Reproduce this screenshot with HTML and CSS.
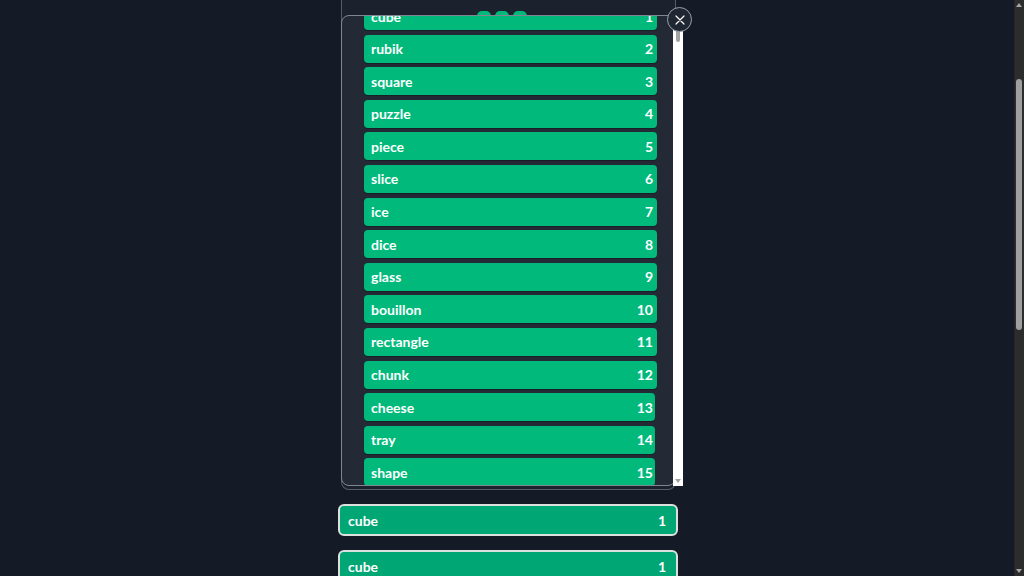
FILE: index.html
```html
<!DOCTYPE html>
<html lang="en">
<head>
<meta charset="utf-8">
<title>Sortable list</title>
<link rel="stylesheet" href="styles.css">
</head>
<body>
<main class="column">
  <section class="board">
    <div class="board-head">
      <span class="pill"></span><span class="pill"></span><span class="pill"></span>
    </div>
    <div class="modal">
      <div class="list">
        <div class="item"><span>cube</span><span>1</span></div>
        <div class="item"><span>rubik</span><span>2</span></div>
        <div class="item"><span>square</span><span>3</span></div>
        <div class="item"><span>puzzle</span><span>4</span></div>
        <div class="item"><span>piece</span><span>5</span></div>
        <div class="item"><span>slice</span><span>6</span></div>
        <div class="item"><span>ice</span><span>7</span></div>
        <div class="item"><span>dice</span><span>8</span></div>
        <div class="item"><span>glass</span><span>9</span></div>
        <div class="item"><span>bouillon</span><span>10</span></div>
        <div class="item"><span>rectangle</span><span>11</span></div>
        <div class="item"><span>chunk</span><span>12</span></div>
        <div class="item narrow"><span>cheese</span><span>13</span></div>
        <div class="item narrow"><span>tray</span><span>14</span></div>
        <div class="item narrow"><span>shape</span><span>15</span></div>
        <div class="item narrow"><span>block</span><span>16</span></div>
        <div class="item narrow"><span>box</span><span>17</span></div>
        <div class="item narrow"><span>brick</span><span>18</span></div>
      </div>
      <div class="mini-scroll" aria-hidden="true">
        <span class="mini-thumb"></span>
        <span class="mini-arrow"></span>
      </div>
      <button class="close" type="button" aria-label="Close">
        <svg viewBox="0 0 24 24" width="12" height="12"><path d="M4 4 L20 20 M20 4 L4 20" stroke="#ffffff" stroke-width="2.4" stroke-linecap="round" fill="none"/></svg>
      </button>
    </div>
  </section>
  <div class="card"><span>cube</span><span>1</span></div>
  <div class="card"><span>cube</span><span>1</span></div>
  <div class="card"><span>cube</span><span>1</span></div>
  <div class="card"><span>cube</span><span>1</span></div>
  <div class="card"><span>cube</span><span>1</span></div>
  <div class="card"><span>cube</span><span>1</span></div>
  <div class="card"><span>cube</span><span>1</span></div>
  <div class="card"><span>cube</span><span>1</span></div>
  <div class="card"><span>cube</span><span>1</span></div>
  <div class="card"><span>cube</span><span>1</span></div>
  <div class="card"><span>cube</span><span>1</span></div>
  <div class="card"><span>cube</span><span>1</span></div>
  <div class="card"><span>cube</span><span>1</span></div>
</main>
<div class="page-scroll" aria-hidden="true">
  <span class="ps-arrow up"></span>
  <span class="ps-thumb"></span>
  <span class="ps-arrow down"></span>
</div>
<script src="script.js"></script>
</body>
</html>
```
FILE: styles.css
```css
html {
  background: #141b26;
}
body {
  margin: 0;
  background: #141b26;
  font-family: "Lato", "Open Sans", "Liberation Sans", sans-serif;
  color: #ffffff;
}
.column {
  width: 340px;
  margin-left: 338px;
  padding: 20px 0 13px;
}
.board {
  position: relative;
  height: 612px;
  margin: 0 2px 0 3px;
  box-sizing: border-box;
  border: 1px solid rgba(200, 206, 214, 0.35);
  border-radius: 8px;
  background: #1b222d;
}
.board-head {
  display: flex;
  gap: 4px;
  padding: 132px 0 0 135px;
}
.pill {
  width: 14px;
  height: 12px;
  border-radius: 5px;
  background: #00b97b;
}
.modal {
  position: absolute;
  left: -1px;
  right: -1px;
  top: 136px;
  bottom: 3px;
  box-sizing: border-box;
  border: 1px solid #80868f;
  border-radius: 8px;
  background: #232a36;
}
.list {
  height: 100%;
  box-sizing: border-box;
  padding: 10px 0 10px 22px;
  overflow-y: scroll;
  scrollbar-width: none;
  border-radius: 8px 0 0 8px;
}
.item {
  display: flex;
  align-items: center;
  justify-content: space-between;
  width: 293px;
  height: 28px;
  box-sizing: border-box;
  padding: 0 4px 0 7px;
  margin-bottom: 4.6px;
  border-radius: 4px;
  background: #00b97b;
  box-shadow: 0 1px 1px rgba(0, 0, 0, 0.3);
  font-size: 14px;
  font-weight: 700;
}
.item.narrow {
  width: 291px;
  padding-right: 2px;
}
.mini-scroll {
  position: absolute;
  top: 0;
  bottom: -1px;
  right: -8px;
  width: 10px;
  background: #ffffff;
}
.mini-thumb {
  position: absolute;
  top: 12px;
  left: 3px;
  width: 4px;
  height: 14px;
  border-radius: 2px;
  background: #a3a3a3;
}
.mini-arrow {
  position: absolute;
  bottom: 3px;
  left: 2px;
  width: 0;
  height: 0;
  border-left: 3px solid transparent;
  border-right: 3px solid transparent;
  border-top: 4px solid #a3a3a3;
}
.close {
  position: absolute;
  top: -9px;
  right: -17px;
  width: 25px;
  height: 25px;
  padding: 0;
  display: flex;
  align-items: center;
  justify-content: center;
  border: 1.5px solid #9aa1aa;
  border-radius: 50%;
  background: #1f2733;
  cursor: pointer;
}
.card {
  display: flex;
  align-items: center;
  justify-content: space-between;
  height: 32px;
  box-sizing: border-box;
  margin-top: 14px;
  padding: 0 10px 0 8px;
  border: 2px solid #dde1de;
  border-radius: 6px;
  background: #00a673;
  font-size: 14px;
  font-weight: 700;
}
.board + .card {
  margin-top: 14px;
}
.page-scroll {
  position: fixed;
  top: 0;
  right: 0;
  bottom: 0;
  width: 9px;
  background: #2c2c2c;
  border-left: 1px solid #262626;
}
.ps-thumb {
  position: absolute;
  top: 79px;
  left: 1px;
  width: 6px;
  height: 251px;
  border-radius: 3px;
  background: #9f9f9f;
}
.ps-arrow {
  position: absolute;
  left: 1px;
  width: 0;
  height: 0;
  border-left: 3px solid transparent;
  border-right: 3px solid transparent;
}
.ps-arrow.up {
  top: 3px;
  border-bottom: 4px solid #a6a6a6;
}
.ps-arrow.down {
  bottom: 3px;
  border-top: 4px solid #a6a6a6;
}
```
FILE: script.js
```js
window.scrollTo(0, 142);
document.querySelector('.list').scrollTop = 24;
```
